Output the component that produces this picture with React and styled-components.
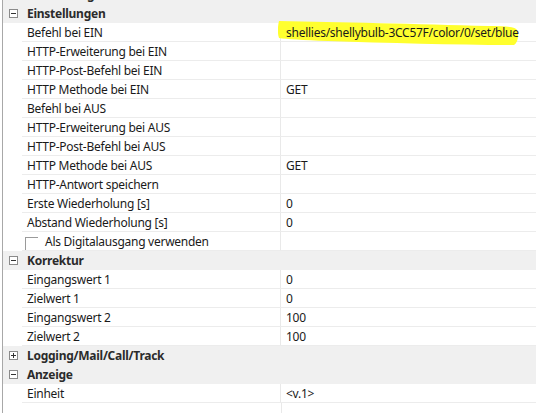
import React from "react";
import styled, { createGlobalStyle } from "styled-components";

const Global = createGlobalStyle`
  html, body { margin: 0; padding: 0; background: #ffffff; }
  body { width: 536px; height: 413px; overflow: hidden; font-family: "Noto Sans", "Open Sans", sans-serif; }
`;

const Grid = styled.div`
  margin-left: 2px;
  margin-top: -15px;
  border-left: 1px solid #a8a8a8;
  height: 428px;
  display: flex;
  flex-direction: column;
  font-size: 12px;
  letter-spacing: -0.26px;
  color: #1a1a1a;
`;

const CategoryRow = styled.div`
  display: flex;
  align-items: center;
  height: 19px;
  background: #f0f0f0;
  font-weight: 700;
  color: #2b2b2b;
`;

const Gutter = styled.div`
  flex: 0 0 19px;
  height: 100%;
  display: flex;
  align-items: center;
  justify-content: center;
  padding-left: 1px;
  box-sizing: border-box;
`;

const ToggleBox = styled.span`
  width: 7px;
  height: 7px;
  border: 1px solid #8a8a8a;
  background: #fff;
  position: relative;
  &::before {
    content: "";
    position: absolute;
    left: 1px; right: 1px; top: 3px;
    height: 1px;
    background: #333;
  }
  &::after {
    content: "";
    display: ${(p) => (p.$open ? "none" : "block")};
    position: absolute;
    top: 1px; bottom: 1px; left: 3px;
    width: 1px;
    background: #333;
  }
`;

const CategoryLabel = styled.div`
  padding-left: 5px;
`;

const Row = styled.div`
  display: flex;
  height: 19px;
  background: #fff;
`;

const Label = styled.div`
  flex: 0 0 259px;
  box-sizing: border-box;
  padding-left: 5px;
  display: flex;
  align-items: center;
  gap: 7px;
  border-right: 1px solid #e9e9e9;
  border-bottom: 1px solid #ececec;
  white-space: nowrap;
`;

const Value = styled.div`
  flex: 1;
  box-sizing: border-box;
  padding-left: 5px;
  display: flex;
  align-items: center;
  border-bottom: 1px solid #ececec;
  position: relative;
  white-space: nowrap;
`;

const Marker = styled.svg`
  position: absolute;
  left: -3px;
  top: -3px;
  width: 242px;
  height: 27px;
  pointer-events: none;
`;

const ValueText = styled.span`
  position: relative;
`;

const Check = styled.span`
  width: 12px;
  height: 12px;
  margin-left: -2px;
  border-top: 1px solid #9a9a9a;
  border-left: 1px solid #9a9a9a;
  margin-top: 5px;
`;

const Filler = styled.div`
  flex: 1;
  display: flex;
`;

const FillLeft = styled.div`
  flex: 0 0 278px;
  border-right: 1px solid #e9e9e9;
`;

const rows = [
  { type: "cat", label: "Verbindung", open: false },
  { type: "cat", label: "Einstellungen", open: true },
  { label: "Befehl bei EIN", value: "shellies/shellybulb-3CC57F/color/0/set/blue", mark: true },
  { label: "HTTP-Erweiterung bei EIN", value: "" },
  { label: "HTTP-Post-Befehl bei EIN", value: "" },
  { label: "HTTP Methode bei EIN", value: "GET" },
  { label: "Befehl bei AUS", value: "" },
  { label: "HTTP-Erweiterung bei AUS", value: "" },
  { label: "HTTP-Post-Befehl bei AUS", value: "" },
  { label: "HTTP Methode bei AUS", value: "GET" },
  { label: "HTTP-Antwort speichern", value: "" },
  { label: "Erste Wiederholung [s]", value: "0" },
  { label: "Abstand Wiederholung [s]", value: "0" },
  { label: "Als Digitalausgang verwenden", value: "", check: true },
  { type: "cat", label: "Korrektur", open: true },
  { label: "Eingangswert 1", value: "0" },
  { label: "Zielwert 1", value: "0" },
  { label: "Eingangswert 2", value: "100" },
  { label: "Zielwert 2", value: "100" },
  { type: "cat", label: "Logging/Mail/Call/Track", open: false },
  { type: "cat", label: "Anzeige", open: true },
  { label: "Einheit", value: "<v.1>" },
];

export default function App() {
  return (
    <>
      <Global />
      <Grid>
        {rows.map((r, i) =>
          r.type === "cat" ? (
            <CategoryRow key={i}>
              <Gutter>
                <ToggleBox $open={r.open} />
              </Gutter>
              <CategoryLabel>{r.label}</CategoryLabel>
            </CategoryRow>
          ) : (
            <Row key={i}>
              <Gutter />
              <Label>
                {r.check && <Check />}
                {r.label}
              </Label>
              <Value>
                {r.mark && (
                  <Marker viewBox="0 0 242 27">
                    <path
                      d="M1 1 C60 2 140 4 210 6 C228 6 238 7 239 10 C241 16 240 22 236 25 C180 25 110 23 50 21 C25 20 8 19 1 18 C-1 12 0 5 1 1 Z"
                      fill="#ffff2e"
                    />
                  </Marker>
                )}
                <ValueText>{r.value}</ValueText>
              </Value>
            </Row>
          )
        )}
        <Filler>
          <FillLeft />
        </Filler>
      </Grid>
    </>
  );
}
